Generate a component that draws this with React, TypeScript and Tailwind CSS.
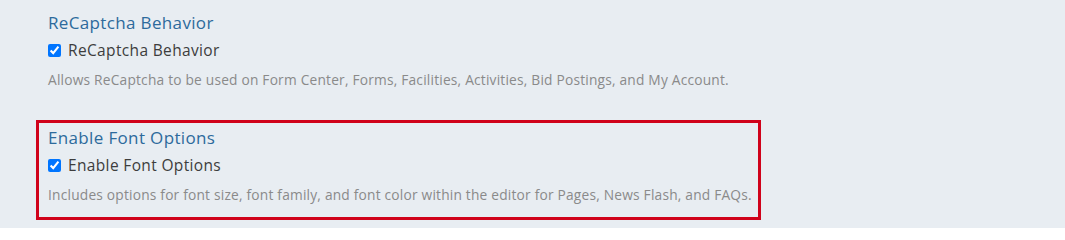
import React from "react"

interface Setting {
  id: string
  title: string
  description: string
  checked: boolean
  highlighted?: boolean
}

const settings: Setting[] = [
  {
    id: "recaptcha",
    title: "ReCaptcha Behavior",
    description:
      "Allows ReCaptcha to be used on Form Center, Forms, Facilities, Activities, Bid Postings, and My Account.",
    checked: true,
  },
  {
    id: "fontOptions",
    title: "Enable Font Options",
    description:
      "Includes options for font size, font family, and font color within the editor for Pages, News Flash, and FAQs.",
    checked: true,
    highlighted: true,
  },
]

function SettingBlock({ setting }: { setting: Setting }) {
  return (
    <div
      className={
        "w-[725px] border-[3px] pl-[9px] pr-[3px] pt-[3px] pb-[12px] " +
        (setting.highlighted ? "border-[#d0021b]" : "border-transparent")
      }
    >
      <h3 className="text-[17px] leading-[24px] tracking-[0.35px] text-[#2d6a9c]">{setting.title}</h3>
      <label className="mt-[5px] flex items-center gap-[7px] text-[15.5px] leading-[20px] tracking-[0.35px] text-[#3d3d3d]">
        <input
          type="checkbox"
          defaultChecked={setting.checked}
          className="m-0 h-[13px] w-[13px] accent-[#0075ff]"
        />
        {setting.title}
      </label>
      <p className="mt-[10px] whitespace-nowrap text-[13.75px] leading-[20px] tracking-[0.2px] text-[#8a8a8a]">
        {setting.description}
      </p>
    </div>
  )
}

export default function App() {
  return (
    <div
      className="flex h-[228px] w-[1065px] flex-col gap-[15px] bg-[#e8edf2] pl-[36px] pt-[5px]"
      style={{ fontFamily: "'Open Sans', Lato, sans-serif" }}
    >
      {settings.map((s) => (
        <SettingBlock key={s.id} setting={s} />
      ))}
    </div>
  )
}
